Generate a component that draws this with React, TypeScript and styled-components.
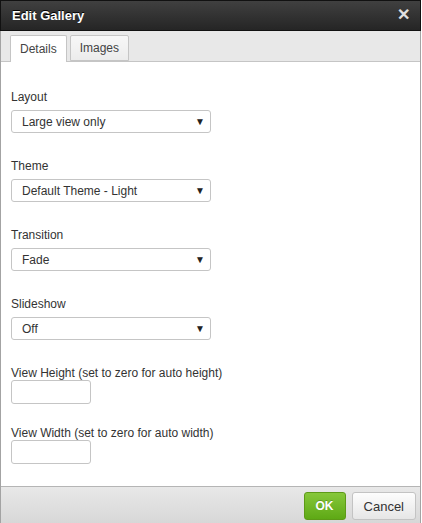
import React from "react";
import styled, { createGlobalStyle } from "styled-components";

const Global = createGlobalStyle`
  html, body { margin: 0; padding: 0; background: #fff; }
  body { font-family: Arial, "Liberation Sans", Helvetica, sans-serif; }
  * { box-sizing: border-box; }
`;

const Dialog = styled.div`
  width: 421px;
  height: 523px;
  display: flex;
  flex-direction: column;
  border: 1px solid #a3a3a3;
  border-top: none;
  background: #fff;
`;

const TitleBar = styled.div`
  height: 31px;
  flex: none;
  display: flex;
  align-items: center;
  justify-content: space-between;
  padding: 0 10px 0 11px;
  background: linear-gradient(#404040, #252525);
  border: 1px solid #111;
  margin: 0 -1px;
`;

const Title = styled.div`
  color: #fff;
  font-weight: bold;
  font-size: 13px;
  text-shadow: 0 -1px 0 #000;
`;

const Close = styled.div`
  color: #e0e0e0;
  font-weight: bold;
  font-size: 16px;
  line-height: 1;
  margin-top: -2px;
`;

const TabBar = styled.div`
  height: 31px;
  flex: none;
  display: flex;
  align-items: flex-end;
  gap: 3px;
  padding: 0 9px;
  background: #e8e8e8;
  border-bottom: 1px solid #c5c5c5;
`;

const Tab = styled.div<{ $active?: boolean }>`
  height: ${(p) => (p.$active ? "27px" : "26px")};
  margin-bottom: ${(p) => (p.$active ? "-1px" : "0")};
  padding: 0 9px;
  display: flex;
  align-items: center;
  font-size: 12px;
  color: #444;
  border: 1px solid #c5c5c5;
  border-bottom: ${(p) => (p.$active ? "none" : "1px solid #c5c5c5")};
  border-radius: 2px 2px 0 0;
  background: ${(p) => (p.$active ? "#fff" : "linear-gradient(#f7f7f7, #ececec)")};
`;

const Body = styled.div`
  flex: 1;
  padding: 28px 10px 0;
  display: flex;
  flex-direction: column;
`;

const Field = styled.div<{ $gap: number }>`
  display: flex;
  flex-direction: column;
  margin-bottom: ${(p) => p.$gap}px;
`;

const Label = styled.div<{ $space: number }>`
  font-size: 12px;
  line-height: 14px;
  color: #333;
  margin-bottom: ${(p) => p.$space}px;
`;

const SelectBox = styled.div`
  width: 200px;
  height: 23px;
  display: flex;
  align-items: center;
  justify-content: space-between;
  padding: 0 5px 0 10px;
  border: 1px solid #c5c5c5;
  border-radius: 3px;
  background: #fff;
  font-size: 12px;
  color: #333;
`;

const Arrow = styled.span`
  font-size: 10px;
  color: #222;
`;

const TextInput = styled.div`
  width: 80px;
  height: 24px;
  border: 1px solid #c5c5c5;
  border-radius: 3px;
  background: #fff;
`;

const Footer = styled.div`
  height: 40px;
  flex: none;
  display: flex;
  align-items: center;
  justify-content: flex-end;
  gap: 6px;
  padding: 0 4px 1px 0;
  border-top: 1px solid #b5b5b5;
  background: linear-gradient(#e8e8e8, #d6d6d6);
`;

const Button = styled.div<{ $primary?: boolean }>`
  height: 28px;
  padding: 0 ${(p) => (p.$primary ? "11px" : "11px")};
  display: flex;
  align-items: center;
  justify-content: center;
  border-radius: 3px;
  font-size: ${(p) => (p.$primary ? "12px" : "13px")};
  font-weight: ${(p) => (p.$primary ? "bold" : "normal")};
  color: ${(p) => (p.$primary ? "#fff" : "#333")};
  border: 1px solid ${(p) => (p.$primary ? "#5d9a17" : "#c3c3c3")};
  background: ${(p) =>
    p.$primary ? "linear-gradient(#86c73a, #5ea915)" : "linear-gradient(#fdfdfd, #e6e6e6)"};
  text-shadow: ${(p) => (p.$primary ? "0 -1px 0 rgba(0,0,0,0.2)" : "none")};
`;

const selects = [
  { label: "Layout", value: "Large view only" },
  { label: "Theme", value: "Default Theme - Light" },
  { label: "Transition", value: "Fade" },
  { label: "Slideshow", value: "Off" },
];

const inputs = ["View Height (set to zero for auto height)", "View Width (set to zero for auto width)"];

export default function App() {
  return (
    <>
      <Global />
      <Dialog>
        <TitleBar>
          <Title>Edit Gallery</Title>
          <Close>✕</Close>
        </TitleBar>
        <TabBar>
          <Tab $active>Details</Tab>
          <Tab>Images</Tab>
        </TabBar>
        <Body>
          {selects.map((s) => (
            <Field key={s.label} $gap={26}>
              <Label $space={6}>{s.label}</Label>
              <SelectBox>
                <span>{s.value}</span>
                <Arrow>▼</Arrow>
              </SelectBox>
            </Field>
          ))}
          {inputs.map((l) => (
            <Field key={l} $gap={22}>
              <Label $space={0}>{l}</Label>
              <TextInput />
            </Field>
          ))}
        </Body>
        <Footer>
          <Button $primary>OK</Button>
          <Button>Cancel</Button>
        </Footer>
      </Dialog>
    </>
  );
}
